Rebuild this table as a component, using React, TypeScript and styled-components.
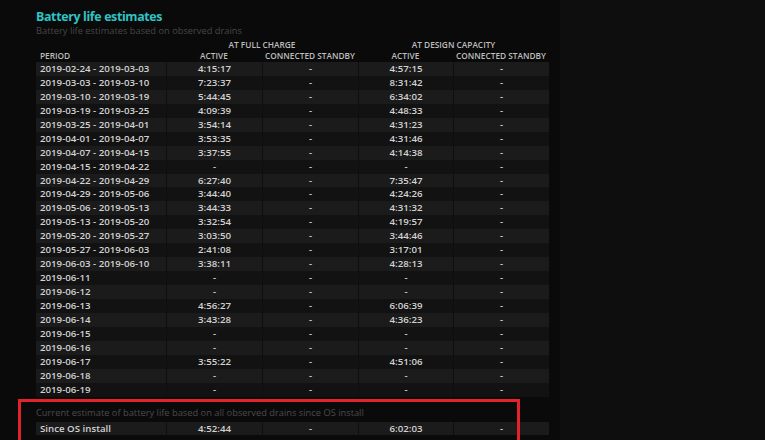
import React from "react";
import styled, { createGlobalStyle } from "styled-components";

const Global = createGlobalStyle`
  html, body { margin: 0; padding: 0; background: #0d0d0d; }
  body { font-family: "Open Sans", "Noto Sans", sans-serif; overflow: hidden; }
`;

const Page = styled.div`
  position: relative;
  width: 765px;
  height: 440px;
  display: flex;
  background: #0e0e0e;
  overflow: hidden;
`;

const Panel = styled.div`
  width: 560px;
  background: #0a0a0a;
  padding: 7px 0 0 36px;
  box-sizing: border-box;
  display: flex;
  flex-direction: column;
`;

const Title = styled.h1`
  margin: 0;
  font-size: 12.4px;
  line-height: 19px;
  font-weight: 700;
  color: #2ec4c6;
  letter-spacing: -0.35px;
`;

const Subtitle = styled.div`
  font-size: 9.3px;
  line-height: 12px;
  color: #474747;
  margin-top: -1px;
`;

const Grid = styled.div`
  display: grid;
  grid-template-columns: 130px 96px 96px 95px 96px;
  width: 513px;
  margin-top: 2px;
`;

const GroupHead = styled.div<{ $span: number }>`
  grid-column: span ${(p) => p.$span};
  font-size: 8.3px;
  line-height: 11px;
  font-weight: 600;
  color: #bdbdbd;
  text-align: center;
  text-transform: uppercase;
`;

const ColHead = styled.div<{ $left?: boolean }>`
  font-size: 8.3px;
  line-height: 12px;
  font-weight: 600;
  color: #bdbdbd;
  text-align: ${(p) => (p.$left ? "left" : "center")};
  padding-left: ${(p) => (p.$left ? "4px" : "0")};
  text-transform: uppercase;
`;

const Row = styled.div<{ $odd: boolean }>`
  display: contents;
  & > div {
    background: ${(p) => (p.$odd ? "#1b1b1b" : "#121212")};
  }
`;

const Cell = styled.div<{ $left?: boolean }>`
  height: 13.95px;
  line-height: 13.95px;
  font-size: 9.7px;
  font-weight: 600;
  color: #d2d2d2;
  text-align: ${(p) => (p.$left ? "left" : "center")};
  padding-left: ${(p) => (p.$left ? "4px" : "0")};
  border-left: ${(p) => (p.$left ? "none" : "1px solid #0e0e0e")};
  white-space: nowrap;
  overflow: hidden;
`;

const Note = styled.div`
  font-size: 9.3px;
  line-height: 12px;
  color: #4a4a4a;
  margin-top: 10px;
  margin-bottom: 1px;
`;

const Highlight = styled.div`
  position: absolute;
  left: 18px;
  top: 399px;
  width: 502px;
  height: 60px;
  border: 3px solid #e3232b;
  box-sizing: border-box;
  pointer-events: none;
`;

type R = [string, string, string, string, string];

const rows: R[] = [
  ["2019-02-24 - 2019-03-03", "4:15:17", "-", "4:57:15", "-"],
  ["2019-03-03 - 2019-03-10", "7:23:37", "-", "8:31:42", "-"],
  ["2019-03-10 - 2019-03-19", "5:44:45", "-", "6:34:02", "-"],
  ["2019-03-19 - 2019-03-25", "4:09:39", "-", "4:48:33", "-"],
  ["2019-03-25 - 2019-04-01", "3:54:14", "-", "4:31:23", "-"],
  ["2019-04-01 - 2019-04-07", "3:53:35", "-", "4:31:46", "-"],
  ["2019-04-07 - 2019-04-15", "3:37:55", "-", "4:14:38", "-"],
  ["2019-04-15 - 2019-04-22", "-", "-", "-", "-"],
  ["2019-04-22 - 2019-04-29", "6:27:40", "-", "7:35:47", "-"],
  ["2019-04-29 - 2019-05-06", "3:44:40", "-", "4:24:26", "-"],
  ["2019-05-06 - 2019-05-13", "3:44:33", "-", "4:31:32", "-"],
  ["2019-05-13 - 2019-05-20", "3:32:54", "-", "4:19:57", "-"],
  ["2019-05-20 - 2019-05-27", "3:03:50", "-", "3:44:46", "-"],
  ["2019-05-27 - 2019-06-03", "2:41:08", "-", "3:17:01", "-"],
  ["2019-06-03 - 2019-06-10", "3:38:11", "-", "4:28:13", "-"],
  ["2019-06-11", "-", "-", "-", "-"],
  ["2019-06-12", "-", "-", "-", "-"],
  ["2019-06-13", "4:56:27", "-", "6:06:39", "-"],
  ["2019-06-14", "3:43:28", "-", "4:36:23", "-"],
  ["2019-06-15", "-", "-", "-", "-"],
  ["2019-06-16", "-", "-", "-", "-"],
  ["2019-06-17", "3:55:22", "-", "4:51:06", "-"],
  ["2019-06-18", "-", "-", "-", "-"],
  ["2019-06-19", "-", "-", "-", "-"],
];

const DataRow = ({ r, odd }: { r: R; odd: boolean }) => (
  <Row $odd={odd}>
    <Cell $left>{r[0]}</Cell>
    <Cell>{r[1]}</Cell>
    <Cell>{r[2]}</Cell>
    <Cell>{r[3]}</Cell>
    <Cell>{r[4]}</Cell>
  </Row>
);

export default function App() {
  return (
    <Page>
      <Global />
      <Panel>
        <Title>Battery life estimates</Title>
        <Subtitle>Battery life estimates based on observed drains</Subtitle>
        <Grid>
          <div />
          <GroupHead $span={2}>At full charge</GroupHead>
          <GroupHead $span={2}>At design capacity</GroupHead>
          <ColHead $left>Period</ColHead>
          <ColHead>Active</ColHead>
          <ColHead>Connected standby</ColHead>
          <ColHead>Active</ColHead>
          <ColHead>Connected standby</ColHead>
          {rows.map((r, i) => (
            <DataRow key={r[0]} r={r} odd={i % 2 === 0} />
          ))}
        </Grid>
        <Note>Current estimate of battery life based on all observed drains since OS install</Note>
        <Grid>
          <DataRow r={["Since OS install", "4:52:44", "-", "6:02:03", "-"]} odd />
        </Grid>
      </Panel>
      <Highlight />
    </Page>
  );
}
